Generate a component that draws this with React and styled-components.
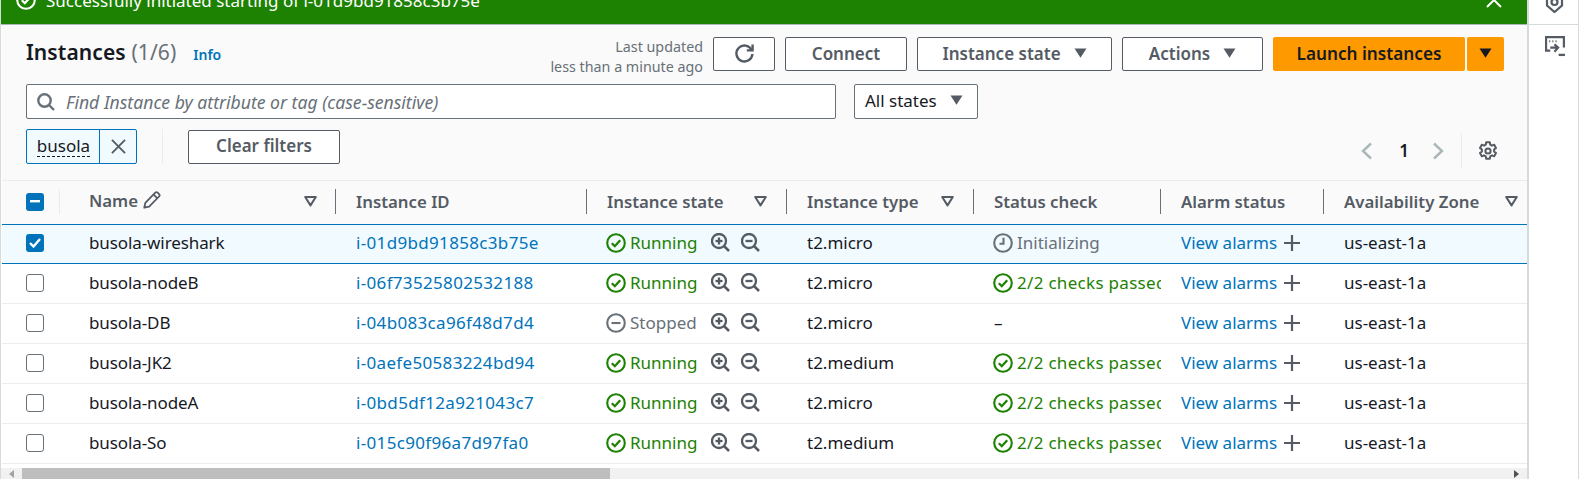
import React from "react";
import styled, { createGlobalStyle } from "styled-components";

const Global = createGlobalStyle`
  html, body { margin: 0; padding: 0; background: #fff; }
  body { font-family: "Noto Sans", "Open Sans", sans-serif; font-size: 17px; color: #16191f; overflow: hidden; }
  * { box-sizing: border-box; }
`;

const Page = styled.div`
  width: 1582px; height: 479px; overflow: hidden; display: flex; background: #fff;
`;
const Main = styled.div`
  width: 1529px; height: 479px; display: flex; flex-direction: column; padding-left: 1px;
  border-right: 2px solid #d5dbdb; border-left: 1px solid #d5dbdb;
`;
const Banner = styled.div`
  flex: none; height: 43px; margin-top: -18px; background: #1d8102; color: #fff; display: flex; align-items: center;
  padding: 0 25px 6px 15px; gap: 10px; font-size: 17px; border-bottom: 1px solid #aab7b8; margin-left: -1px;
`;
const BannerText = styled.span` flex: 1; white-space: nowrap; `;
const Panel = styled.div`
  flex: none; height: 156px; background: #fafafa; padding: 12px 23px 0 24px; display: flex; flex-direction: column;
  border-bottom: 1px solid #eaeded;
`;
const Row = styled.div` display: flex; align-items: center; `;
const TopRow = styled(Row)` height: 34px; `;
const Title = styled.h1` margin: 0; padding-bottom: 4px; font-size: 21px; font-weight: 600; line-height: 30px; white-space: nowrap; letter-spacing: .1px; `;
const Count = styled.span` color: #687078; font-weight: 400; `;
const Info = styled.a` color: #0073bb; font-size: 14px; font-weight: 600; margin-left: 17px; flex: 1; `;
const Updated = styled.div`
  font-size: 14.3px; line-height: 20px; padding-top: 6px; text-align: right; color: #687078; margin-right: 10px; white-space: nowrap;
`;
const Btn = styled.button`
  height: 34px; width: ${p => p.$w}px; margin-right: ${p => p.$mr ?? 10}px; display: flex; align-items: center; justify-content: center; gap: ${p => p.$gap ?? 13}px;
  background: #fff; border: 1px solid #545b64; border-radius: 2px; color: #545b64; font: 600 17px "Noto Sans", sans-serif; padding: 0 0 2px;
`;
const Orange = styled.button`
  height: 34px; width: ${p => p.$w}px; margin-right: ${p => p.$mr ?? 0}px; display: flex; align-items: center; justify-content: center;
  background: #ff9900; border: 0; border-radius: 2px; color: #16191f; font: 600 17.2px "Noto Sans", sans-serif; padding: 0 0 2px;
`;
const SearchRow = styled(Row)` height: 35px; margin-top: 13px; `;
const Search = styled.div`
  width: 810px; height: 35px; background: #fff; border: 1px solid #687078; border-radius: 2px; display: flex; align-items: center; padding-left: 10px; gap: 11px;
  font-style: italic; color: #687078; font-size: 17.6px;
`;
const Select = styled.div`
  margin-left: 18px; width: 124px; height: 35px; background: #fff; border: 1px solid #687078; border-radius: 2px; display: flex; align-items: center; padding: 0 0 2px 10px; gap: 13px; font-size: 17px;
`;
const FilterRow = styled(Row)` height: 35px; margin-top: 10px; `;
const Chip = styled.div`
  width: 111px; height: 35px; display: flex; background: #f1faff; border: 1px solid #0073bb; border-radius: 2px;
`;
const ChipLabel = styled.div`
  width: 73px; border-right: 1px solid #0073bb; display: flex; align-items: center; justify-content: center; padding: 0 0 2px 1px;
`;
const Dashed = styled.span` border-bottom: 1px dashed #16191f; line-height: 21px; font-size: 17px; `;
const ChipX = styled.div` flex: 1; display: flex; align-items: center; justify-content: center; color: #545b64; `;
const VSep = styled.div` width: 1px; height: 35px; background: #eaeded; margin: 0 25px 0 25px; `;
const Spacer = styled.div` flex: 1; `;
const Pager = styled.div` display: flex; align-items: center; height: 35px; margin-top: 8px; margin-right: 6px; `;
const PageNum = styled.span` font-weight: 600; font-size: 17px; width: 59px; padding-left: 3px; text-align: center; color: #16191f; `;
const PagerSep = styled.div` width: 1px; height: 35px; background: #eaeded; margin: 0 16px 0 17px; `;

const cols = "58px 276px 251px 200px 187px 187px 163px 204px";
const Head = styled.div`
  display: grid; grid-template-columns: ${cols}; height: 43px; flex: none; background: #fafafa;
`;
const HCell = styled.div`
  display: flex; align-items: center; padding-left: 20px; padding-right: ${p => p.$pr ?? 20}px; justify-content: space-between;
  font-weight: 600; color: #545b64; font-size: 16.8px; white-space: nowrap; position: relative; padding-bottom: 3px;
  &::after {
    content: ""; display: ${p => p.$noSep ? "none" : "block"}; position: absolute; right: 0; top: 8px; height: 25px; width: 1px; background: ${p => p.$light ? "#eaeded" : "#687078"};
  }
`;
const NameHead = styled(HCell)` padding-left: 29px; padding-right: 19px; `;
const CheckHead = styled(HCell)` padding-left: 24px; padding-right: 0; padding-bottom: 2px; `;
const HLabel = styled.span` display: inline-flex; align-items: center; gap: 5px; margin-top: -2px; `;
const Body = styled.div` flex: none; display: flex; flex-direction: column; `;
const TRow = styled.div`
  display: grid; grid-template-columns: ${cols}; height: 40px; flex: none; align-items: center; background: ${p => p.$sel ? "#f1faff" : "#fff"};
  border-top: 1px solid ${p => p.$sel ? "#0073bb" : "transparent"};
  border-bottom: 1px solid ${p => p.$sel ? "#0073bb" : "#eaeded"};
  font-size: 17px;
`;
const Cell = styled.div`
  padding-left: 20px; white-space: nowrap; overflow: hidden; display: flex; align-items: center; height: 38px; margin-top: -3px;
`;
const NameCell = styled(Cell)` padding-left: 29px; letter-spacing: -.1px; `;
const CheckCell = styled.div` display: flex; justify-content: center; padding-left: 8px; margin-top: -2px; `;
const IdLink = styled.a` color: #0073bb; letter-spacing: .33px; `;
const Link = styled.a` color: #0073bb; `;
const Status = styled.span`
  display: inline-flex; align-items: center; gap: 4px; color: ${p => p.$c}; margin-left: -1px; letter-spacing: ${p => p.$ls ?? 0}px;
`;
const Box = styled.div`
  width: 18px; height: 18px; border-radius: 3px; display: flex; align-items: center; justify-content: center; background: ${p => p.$on ? "#0073bb" : "#fff"}; border: ${p => p.$on ? "0" : "1px solid #687078"};
`;
const Zooms = styled.span` display: inline-flex; gap: 11px; margin-left: 14px; color: #545b64; `;
const Plus = styled.span` display: inline-flex; margin-left: 7px; color: #545b64; `;
const Scroll = styled.div`
  flex: 1; background: #f1f1f1; display: flex; align-items: center; min-height: 0; margin-top: 4px; margin-left: -1px;
`;
const ArrowBox = styled.div` width: 21px; display: flex; justify-content: center; color: #a3a3a3; `;
const Thumb = styled.div` width: 588px; height: 100%; background: #bebebe; `;
const Rail = styled.div` width: 50px; display: flex; flex-direction: column; align-items: center; border-right: 1px solid #d5dbdb; `;
const RailTop = styled.div` width: 100%; height: 25px; border-bottom: 1px solid #d5dbdb; overflow: hidden; display: flex; justify-content: center; align-items: flex-end; padding: 0 0 11px 2px; color: #545b64; `;
const RailItem = styled.div` margin-top: 11px; color: #545b64; display: flex; margin-left: 3px; `;

const Caret = ({ c = "#545b64", w = 13 }) => (
  <svg width={w} height={w * 0.78} viewBox="0 0 14 11"><path d="M0.5 0.5h13L7 10.5z" fill={c} /></svg>
);
const SortIcon = () => (
  <svg width="13" height="11" viewBox="0 0 13 11" fill="none"><path d="M1.2 1h10.6L6.5 9.4z" stroke="#545b64" strokeWidth="2" strokeLinejoin="round" /></svg>
);
const CheckCircle = ({ c = "#fff", s = 20 }) => (
  <svg width={s} height={s} viewBox="0 0 20 20" fill="none" stroke={c} strokeWidth="2.1"><circle cx="10" cy="10" r="8.8" /><path d="M5.8 10.2l3 3 5.4-6" strokeWidth="2.3" /></svg>
);
const StopCircle = () => (
  <svg width="20" height="20" viewBox="0 0 20 20" fill="none" stroke="#687078" strokeWidth="2.1"><circle cx="10" cy="10" r="8.8" /><path d="M5.5 10h9" /></svg>
);
const Clock = () => (
  <svg width="20" height="20" viewBox="0 0 20 20" fill="none" stroke="#687078" strokeWidth="2.1"><circle cx="10" cy="10" r="8.8" /><path d="M10.5 4.8v6H6.5" /></svg>
);
const Magnifier = ({ plus }) => (
  <svg width="19" height="19" viewBox="0 0 19 19" fill="none" stroke="currentColor" strokeWidth="2.3">
    <circle cx="8" cy="8" r="7" /><path d="M13 13l5 5" strokeWidth="2.5" /><path d="M4.5 8h7" />{plus && <path d="M8 4.5v7" />}
  </svg>
);
const PlusIcon = () => (
  <svg width="16" height="16" viewBox="0 0 16 16" stroke="currentColor" strokeWidth="2.2"><path d="M0 8h16M8 0v16" /></svg>
);
const Pencil = () => (
  <svg width="18" height="18" viewBox="0 0 17 17" fill="none" stroke="#545b64" strokeWidth="1.7" strokeLinejoin="round"><path d="M1.2 15.8l1-4.6L11.6 1.6a1.6 1.6 0 012.2 0l1.4 1.4a1.6 1.6 0 010 2.2l-9.4 9.6z" /><path d="M10 3.4l3.6 3.6" /></svg>
);
const Chevron = ({ right }) => (
  <svg width="12" height="18" viewBox="0 0 12 18" fill="none" stroke="#aab7b8" strokeWidth="2.4"><path d={right ? "M2 1.5L10 9l-8 7.5" : "M10 1.5L2 9l8 7.5"} /></svg>
);
const Gear = () => (
  <svg width="20" height="20" viewBox="0 0 20 20" fill="none" stroke="#545b64" strokeWidth="2" strokeLinejoin="round"><path d="M8.2 1.2h3.6l.5 2.5 1.5.9 2.4-.8 1.8 3.1-1.9 1.7v1.8l1.9 1.7-1.8 3.1-2.4-.8-1.5.9-.5 2.5H8.2l-.5-2.5-1.5-.9-2.4.8-1.8-3.1 1.9-1.7V8.6L2 6.9l1.8-3.1 2.4.8 1.5-.9z" /><circle cx="10" cy="10" r="2.6" /></svg>
);
const Refresh = () => (
  <svg width="21" height="21" viewBox="0 0 21 21" fill="none" stroke="#545b64" strokeWidth="2.4"><path d="M17.6 7A8 8 0 1018.4 11" /><path d="M18.6 1.5V7.4H12.8" /></svg>
);
const SearchIcon = () => (
  <svg width="18" height="18" viewBox="0 0 18 18" fill="none" stroke="#687078" strokeWidth="2.4"><circle cx="7.5" cy="7.5" r="6.2" /><path d="M12 12l5 5" /></svg>
);
const XIcon = ({ s = 16, w = 2 }) => (
  <svg width={s} height={s} viewBox="0 0 16 16" stroke="currentColor" strokeWidth={w}><path d="M1 1l14 14M15 1L1 15" /></svg>
);
const ShieldIcon = () => (
  <svg width="19" height="20" viewBox="0 0 19 20" fill="none" stroke="currentColor" strokeWidth="2.2"><path d="M9.5 1L17 3.5v9L9.5 19 2 12.5v-9z" /><circle cx="9.5" cy="9" r="3" /></svg>
);
const ConsoleIcon = () => (
  <svg width="21" height="21" viewBox="0 0 20 20" fill="none" stroke="currentColor" strokeWidth="2.1">
    <path d="M5 14H1V1h17v10" />
    <path d="M4 5h1M7 5h1M10 5h1" />
    <path d="M5 11h7M9 8l3.5 3L9 15" /><path d="M13 18h6" strokeWidth="2.2" />
  </svg>
);

const rows = [
  ["busola-wireshark", "i-01d9bd91858c3b75e", "run", "t2.micro", "init", true],
  ["busola-nodeB", "i-06f73525802532188", "run", "t2.micro", "ok"],
  ["busola-DB", "i-04b083ca96f48d7d4", "stop", "t2.micro", "none"],
  ["busola-JK2", "i-0aefe50583224bd94", "run", "t2.medium", "ok"],
  ["busola-nodeA", "i-0bd5df12a921043c7", "run", "t2.micro", "ok"],
  ["busola-So", "i-015c90f96a7d97fa0", "run", "t2.medium", "ok"],
];

const StateCell = ({ s }) => s === "run"
  ? <Status $c="#1d8102"><CheckCircle c="#1d8102" />Running</Status>
  : <Status $c="#687078"><StopCircle />Stopped</Status>;

const CheckStatus = ({ s }) => {
  if (s === "init") return <Status $c="#687078"><Clock />Initializing</Status>;
  if (s === "ok") return <Status $c="#1d8102" $ls={0.3}><CheckCircle c="#1d8102" />2/2 checks passed</Status>;
  return <span>–</span>;
};

export default function App() {
  return (
    <Page>
      <Global />
      <Main>
        <Banner>
          <CheckCircle s={20} />
          <BannerText>Successfully initiated starting of i-01d9bd91858c3b75e</BannerText>
          <XIcon s={16} />
        </Banner>
        <Panel>
          <TopRow>
            <Title>Instances <Count>(1/6)</Count></Title>
            <Info>Info</Info>
            <Updated>Last updated<br />less than a minute ago</Updated>
            <Btn $w={62}><Refresh /></Btn>
            <Btn $w={122}>Connect</Btn>
            <Btn $w={195}>Instance state <Caret /></Btn>
            <Btn $w={141}>Actions <Caret /></Btn>
            <Orange $w={192} $mr={2}>Launch instances</Orange>
            <Orange $w={37}><Caret c="#16191f" /></Orange>
          </TopRow>
          <SearchRow>
            <Search><SearchIcon />Find Instance by attribute or tag (case-sensitive)</Search>
            <Select>All states <Caret /></Select>
          </SearchRow>
          <FilterRow>
            <Chip>
              <ChipLabel><Dashed>busola</Dashed></ChipLabel>
              <ChipX><XIcon s={15} /></ChipX>
            </Chip>
            <VSep />
            <Btn $w={152} $mr={0}>Clear filters</Btn>
            <Spacer />
            <Pager>
              <Chevron />
              <PageNum>1</PageNum>
              <Chevron right />
              <PagerSep />
              <Gear />
            </Pager>
          </FilterRow>
        </Panel>
        <Head>
          <CheckHead $light><Box $on><svg width="10" height="3"><rect width="10" height="2.4" fill="#fff" /></svg></Box></CheckHead>
          <NameHead><HLabel>Name <Pencil /></HLabel><SortIcon /></NameHead>
          <HCell>Instance ID</HCell>
          <HCell>Instance state <SortIcon /></HCell>
          <HCell>Instance type <SortIcon /></HCell>
          <HCell>Status check</HCell>
          <HCell>Alarm status</HCell>
          <HCell $noSep $pr={10}>Availability Zone <SortIcon /></HCell>
        </Head>
        <Body>
          {rows.map(r => (
            <TRow key={r[1]} $sel={r[5]}>
              <CheckCell>
                <Box $on={r[5]}>
                  {r[5] && <svg width="12" height="10" viewBox="0 0 12 10" fill="none" stroke="#fff" strokeWidth="2.4"><path d="M1 5l3.5 3.5L11 1" /></svg>}
                </Box>
              </CheckCell>
              <NameCell>{r[0]}</NameCell>
              <Cell><IdLink>{r[1]}</IdLink></Cell>
              <Cell><StateCell s={r[2]} /><Zooms><Magnifier plus /><Magnifier /></Zooms></Cell>
              <Cell>{r[3]}</Cell>
              <Cell><CheckStatus s={r[4]} /></Cell>
              <Cell><Link>View alarms</Link><Plus><PlusIcon /></Plus></Cell>
              <Cell>us-east-1a</Cell>
            </TRow>
          ))}
        </Body>
        <Scroll>
          <ArrowBox><svg width="5" height="8"><path d="M5 0v8L0 4z" fill="#a3a3a3" /></svg></ArrowBox>
          <Thumb />
          <Spacer />
          <ArrowBox><svg width="5" height="8"><path d="M0 0v8l5-4z" fill="#505050" /></svg></ArrowBox>
        </Scroll>
      </Main>
      <Rail>
        <RailTop><ShieldIcon /></RailTop>
        <RailItem><ConsoleIcon /></RailItem>
      </Rail>
    </Page>
  );
}
